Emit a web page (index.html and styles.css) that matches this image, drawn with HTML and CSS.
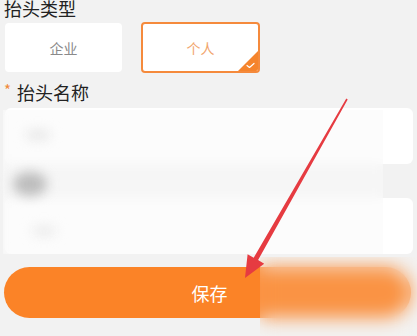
FILE: index.html
```html
<!DOCTYPE html>
<html lang="zh">
<head>
<meta charset="utf-8">
<link rel="stylesheet" href="styles.css">
</head>
<body>
<div class="page">
  <div class="title">抬头类型</div>
  <div class="types">
    <div class="type">企业</div>
    <div class="type active">个人
      <span class="corner">
        <svg viewBox="0 0 20 20" width="20" height="20"><path d="M20 0 L20 20 L0 20 Z" fill="#f5842c"/><path d="M9 14.5 L11.5 16.5 L16 12.5" fill="none" stroke="#fff" stroke-width="1.2" stroke-linecap="round" stroke-linejoin="round"/></svg>
      </span>
    </div>
  </div>
  <div class="label"><span class="star">*</span>抬头名称</div>
  <div class="fields">
    <div class="field"></div>
    <div class="field second"></div>
    <div class="blur-zone">
      <span class="blob b1"></span>
      <span class="blob b2"></span>
      <span class="blob b3"></span>
    </div>
  </div>
  <div class="btn-row">
    <div class="save">保存</div>
    <div class="btn-blur"></div>
  </div>
  <svg class="arrow" viewBox="0 0 417 336" width="417" height="336">
    <polygon points="346.3,100.6 253.7,259.7 247.6,256.2 245,280 264.2,265.7 258.1,262.1 347.7,101.4" fill="#e63b41"/>
  </svg>
</div>
</body>
</html>
```

FILE: styles.css
```css
html, body {
  margin: 0;
  padding: 0;
  background: #f2f2f2;
}
body {
  width: 417px;
  height: 336px;
  overflow: hidden;
  font-family: "Noto Sans CJK SC", "Noto Sans", sans-serif;
}
.page {
  position: relative;
  padding: 0 4px 0 4px;
}
.title {
  font-size: 18px;
  line-height: 20px;
  margin-top: -2px;
  color: #222;
}
.types {
  display: flex;
  gap: 19px;
  margin-top: 5px;
  padding-left: 1px;
}
.type {
  position: relative;
  width: 117px;
  height: 49px;
  background: #fff;
  border-radius: 4px;
  display: flex;
  align-items: center;
  justify-content: center;
  font-size: 14px;
  color: #8a8a8a;
  overflow: hidden;
}
.type.active {
  box-sizing: border-box;
  width: 119px;
  height: 51px;
  margin-top: -1px;
  border: 2px solid #f58a3c;
  color: #f2a56d;
}
.corner {
  position: absolute;
  right: 0;
  bottom: 0;
  width: 20px;
  height: 20px;
  line-height: 0;
}
.label {
  margin-top: 8px;
  font-size: 18px;
  line-height: 22px;
  color: #222;
  display: flex;
  align-items: flex-start;
}
.star {
  color: #f08a3a;
  font-size: 15px;
  line-height: 14px;
  margin-right: 6px;
  margin-top: 2px;
}
.fields {
  position: relative;
  margin-top: 5px;
  padding-left: 1px;
  display: flex;
  flex-direction: column;
  gap: 34px;
}
.field {
  height: 56px;
  width: 408px;
  background: #fff;
  border-radius: 6px;
}
.blur-zone {
  position: absolute;
  left: -1px;
  top: 2px;
  width: 380px;
  height: 144px;
  background: rgba(250, 250, 250, 0.5);
  backdrop-filter: blur(6px);
}
.blob {
  position: absolute;
  border-radius: 50%;
  filter: blur(6px);
}
.b1 {
  left: 10px;
  top: 62px;
  width: 34px;
  height: 24px;
  background: #bdbdbd;
}
.b2 {
  left: 22px;
  top: 20px;
  width: 26px;
  height: 10px;
  background: #e6e6e6;
}
.b3 {
  left: 28px;
  top: 116px;
  width: 26px;
  height: 10px;
  background: #ebebeb;
}
.btn-row {
  position: relative;
  margin-top: 13px;
}
.save {
  width: 407px;
  height: 51px;
  border-radius: 26px;
  background: #fb8327;
  color: #fff;
  font-size: 18px;
  display: flex;
  align-items: center;
  justify-content: center;
  padding-left: 4px;
  box-sizing: border-box;
}
.btn-blur {
  position: absolute;
  left: 256px;
  top: -10px;
  width: 161px;
  height: 90px;
  backdrop-filter: blur(9px);
  background: rgba(250, 240, 232, 0.15);
}
.arrow {
  position: absolute;
  left: 0;
  top: 0;
  pointer-events: none;
}
```
